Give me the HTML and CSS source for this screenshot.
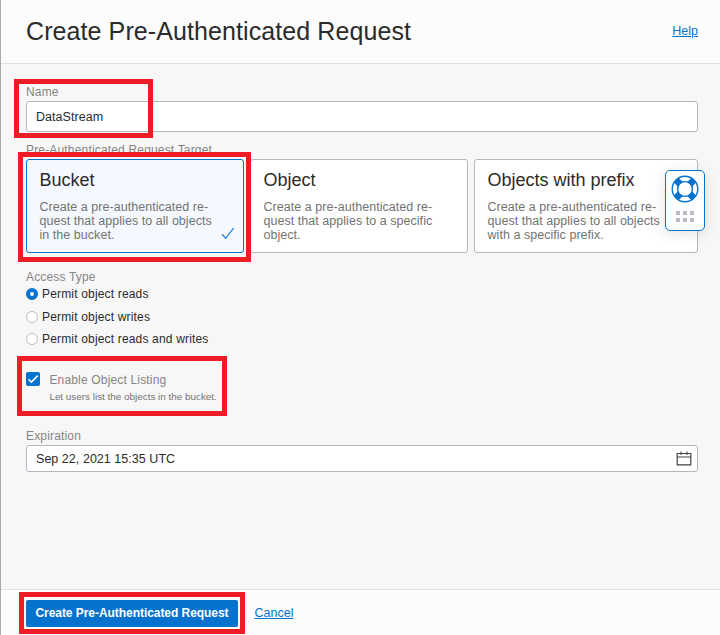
FILE: index.html
```html
<!DOCTYPE html>
<html lang="en">
<head>
<meta charset="utf-8">
<title>Create Pre-Authenticated Request</title>
<link rel="stylesheet" href="styles.css">
</head>
<body>
<div class="panel">
  <header class="header">
    <h1 class="title">Create Pre-Authenticated Request</h1>
    <a class="link help" href="#">Help</a>
  </header>
  <main class="content">
    <section class="name">
      <div class="label">Name</div>
      <div class="field field-name">DataStream</div>
      <span class="mark mark-name"></span>
    </section>
    <section class="target">
      <div class="label">Pre-Authenticated Request Target</div>
      <div class="cards">
        <div class="card selected">
          <h2 class="card-title">Bucket</h2>
          <p class="card-text">Create a pre-authenticated re-<br>quest that applies to all objects<br>in the bucket.</p>
          <svg class="tick" viewBox="0 0 14 13"><path d="M1 7.3 4.6 11.3 12.6 1.2" fill="none" stroke="#2a84d6" stroke-width="1.3"/></svg>
          <span class="mark mark-bucket"></span>
        </div>
        <div class="card">
          <h2 class="card-title">Object</h2>
          <p class="card-text">Create a pre-authenticated re-<br>quest that applies to a specific<br>object.</p>
        </div>
        <div class="card">
          <h2 class="card-title">Objects with prefix</h2>
          <p class="card-text">Create a pre-authenticated re-<br>quest that applies to all objects<br>with a specific prefix.</p>
        </div>
      </div>
    </section>
    <section class="access">
      <div class="label">Access Type</div>
      <div class="option"><span class="radio checked"></span>Permit object reads</div>
      <div class="option"><span class="radio"></span>Permit object writes</div>
      <div class="option"><span class="radio"></span>Permit object reads and writes</div>
    </section>
    <section class="listing">
      <svg class="checkbox" viewBox="0 0 14 14"><rect width="14" height="14" rx="2" fill="#0572ce"/><path d="M2.5 7.2 5.4 10.1 11.8 3.6" fill="none" stroke="#fff" stroke-width="1.5"/></svg>
      <div>
        <div class="label listing-label">Enable Object Listing</div>
        <div class="hint">Let users list the objects in the bucket.</div>
      </div>
      <span class="mark mark-listing"></span>
    </section>
    <section class="expiration">
      <div class="label">Expiration</div>
      <div class="field field-date">
        <span>Sep 22, 2021 15:35 UTC</span>
        <svg class="calendar" viewBox="0 0 16 15"><path d="M1.2 2.5H14.8V13.8H1.2ZM1 6H15" fill="none" stroke="#444" stroke-width="1.2"/><path d="M5 .5V4M11 .5V4" fill="none" stroke="#555" stroke-width="1.2"/></svg>
      </div>
    </section>
  </main>
  <footer class="footer">
    <div class="submit">
      <button class="button">Create Pre-Authenticated Request</button>
      <span class="mark mark-submit"></span>
    </div>
    <a class="link cancel" href="#">Cancel</a>
  </footer>
  <div class="support">
    <svg class="buoy" viewBox="0 0 28 28">
      <circle cx="14" cy="14" r="12.8" fill="#fff"/>
      <path d="M5.2 5.2 22.8 22.8M22.8 5.2 5.2 22.8" stroke="#0572ce" stroke-width="6.8"/>
      <circle cx="14" cy="14" r="12.8" fill="none" stroke="#0572ce" stroke-width="1.4"/>
      <circle cx="14" cy="14" r="7.4" fill="#fff" stroke="#0572ce" stroke-width="1.4"/>
    </svg>
    <div class="dots"><i></i><i></i><i></i><i></i><i></i><i></i></div>
  </div>
</div>
</body>
</html>
```

FILE: styles.css
```css
* { box-sizing: border-box; }
body { margin: 0; font-family: "Liberation Sans", Arial, sans-serif; font-size: 12px; color: #2b2b2b; }
h1, h2, p { margin: 0; font-weight: 400; }
.panel { position: relative; display: flex; flex-direction: column; width: 720px; height: 635px; overflow: hidden; border-left: 1px solid #aaa; background: #f7f7f7; }
.header { display: flex; justify-content: space-between; height: 64px; padding: 0 22px 0 25px; background: #fcfcfc; border-bottom: 1px solid #e1e1e1; }
.title { font-size: 25px; line-height: 28px; margin-top: 17px; letter-spacing: .09px; color: #2b2b2b; }
.link { color: #0572ce; text-decoration: underline; line-height: 16px; font-size: 12.5px; }
.help { margin-top: 23px; }
.content { flex: 1; padding: 20px 22px 0 25px; }
.label { height: 16px; line-height: 16px; letter-spacing: .17px; color: #858585; }
.field { display: flex; align-items: center; justify-content: space-between; padding: 0 5px 0 9px; border: 1px solid #b3b7c2; border-radius: 3px; background: #fff; font-size: 12.5px; letter-spacing: .04px; }
.name, .submit, .listing { position: relative; }
.name { height: 58px; }
.field-name { height: 31px; margin-top: 1px; }
.cards { display: grid; grid-template-columns: 218px 218px 1fr; gap: 6px; margin-top: 1px; }
.card { position: relative; height: 94px; padding: 9px 0 0 12.5px; background: #fff; border: 1px solid #b3b7c2; border-radius: 3px; }
.selected { background: #f5f9ff; border-color: #0572ce; z-index: 1; }
.card-title { font-size: 18px; line-height: 22px; color: #2b2b2b; }
.card-text { margin-top: 9px; font-size: 12.5px; line-height: 14px; letter-spacing: .04px; color: #737373; white-space: nowrap; }
.tick { position: absolute; right: 8px; bottom: 12px; width: 14px; height: 13px; }
.access { margin-top: 16px; height: 103px; }
.option { display: flex; align-items: center; gap: 4px; height: 22.4px; letter-spacing: .17px; }
.access .label { height: 14px; }
.radio { width: 12px; height: 12px; border: 1px solid #b9bcc5; border-radius: 50%; background: #fff; }
.checked { border: 4px solid #0572ce; }
.listing { display: flex; gap: 9.4px; height: 56px; }
.checkbox { width: 14px; height: 14px; }
.hint { margin-top: 3px; font-size: 9.9px; line-height: 12px; color: #737373; }
.field-date { height: 27px; margin-top: 1px; }
.calendar { width: 16px; height: 15px; }
.footer { display: flex; height: 46px; padding: 10px 0 0 25px; gap: 16.5px; background: #fcfcfc; border-top: 1px solid #e1e1e1; }
.button { display: block; width: 212px; height: 27px; padding: 0 0 1px; border: 0; border-radius: 2px; background: #0572ce; color: #fff; font: bold 12px "Liberation Sans", Arial, sans-serif; letter-spacing: -.05px; }
.cancel { margin-top: 5px; }
.mark { position: absolute; border: 5px solid #ee1c24; z-index: 2; }
.mark-name { left: -12px; top: -5px; width: 139px; height: 59px; }
.mark-bucket { left: -9px; top: -8px; width: 233px; height: 110px; }
.mark-listing { left: -9px; top: -16px; width: 210px; height: 60px; }
.mark-submit { left: -7px; top: -8px; width: 226px; height: 42px; }
.support { position: absolute; left: 664px; top: 170px; z-index: 3; display: flex; flex-direction: column; align-items: center; width: 40px; height: 61px; padding-top: 4px; border: 1px solid #0572ce; border-radius: 5px; background: #fff; box-shadow: 0 3px 14px rgba(0,0,0,.12); }
.buoy { width: 28px; height: 28px; }
.dots { display: grid; grid-template-columns: repeat(3, 4px); gap: 3px; margin-top: 8px; }
.dots i { width: 4px; height: 4px; background: #b9bcc5; }
```
